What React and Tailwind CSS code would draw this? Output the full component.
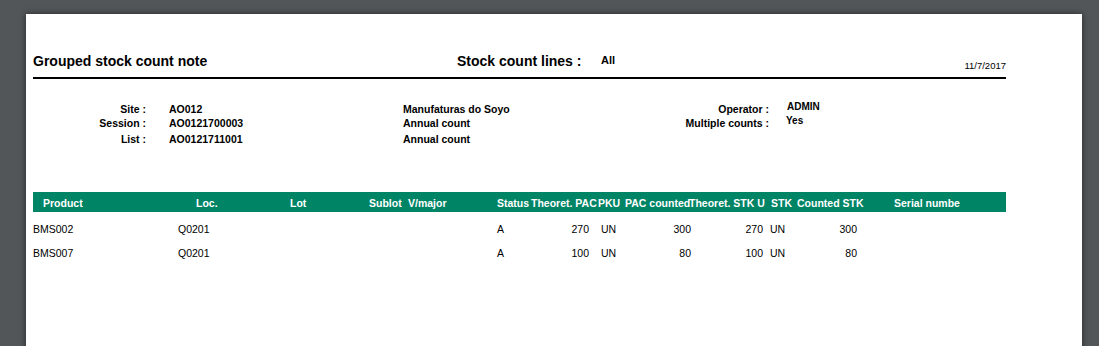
const HEAD = [
  { label: "Product", w: "w-[153px]" },
  { label: "Loc.", w: "w-[94px]" },
  { label: "Lot", w: "w-[79px]" },
  { label: "Sublot", w: "w-[39px]" },
  { label: "V/major", w: "w-[89px]" },
  { label: "Status", w: "w-[34px]" },
  { label: "Theoret. PAC", w: "w-[67px]" },
  { label: "PKU", w: "w-[27px]" },
  { label: "PAC counted", w: "w-[64px]" },
  { label: "Theoret. STK U", w: "w-[82px]" },
  { label: "STK", w: "w-[26px]" },
  { label: "Counted STK", w: "w-[97px]" },
  { label: "Serial numbe", w: "flex-1" },
];

const LINES = [
  { product: "BMS002", loc: "Q0201", status: "A", theo: 270, pku: "UN", counted: 300, theoStk: 270, stk: "UN", countedStk: 300 },
  { product: "BMS007", loc: "Q0201", status: "A", theo: 100, pku: "UN", counted: 80, theoStk: 100, stk: "UN", countedStk: 80 },
];

const INFO = [
  { label: "Site :", value: "AO012", desc: "Manufaturas do Soyo", h: "h-[14px]" },
  { label: "Session :", value: "AO0121700003", desc: "Annual count", h: "h-[16px]" },
  { label: "List :", value: "AO0121711001", desc: "Annual count", h: "h-[14px]" },
];

export default function App() {
  return (
    <div className="h-[346px] overflow-hidden bg-[#525659] pt-[14px] font-['Liberation_Sans',Arial,sans-serif] text-black">
      <div className="ml-[26px] w-[1056px] h-[340px] bg-white shadow-[0_0_6px_rgba(0,0,0,0.55)] px-[7px] pt-[39px]">
        <div className="w-[973px]">

          {/* title row */}
          <div className="flex items-baseline h-[16px] leading-[16px]">
            <span className="w-[424px] text-[14px] font-bold">Grouped stock count note</span>
            <span className="w-[144px] text-[14px] font-bold">Stock count lines :</span>
            <span className="relative -top-[2px] text-[11px] font-bold">All</span>
            <span className="ml-auto relative top-[3px] text-[9.5px]">11/7/2017</span>
          </div>
          <div className="mt-[8px] h-[2px] bg-black" />

          {/* info block */}
          <div className="mt-[23px] flex text-[10.5px] font-bold leading-[14px]">
            <div className="w-[370px]">
              {INFO.map((r) => (
                <div key={r.label} className={`flex ${r.h}`}>
                  <span className="w-[113px] text-right">{r.label}</span>
                  <span className="ml-[23px]">{r.value}</span>
                </div>
              ))}
            </div>
            <div className="w-[240px]">
              {INFO.map((r, i) => (
                <div key={i} className={r.h}>{r.desc}</div>
              ))}
            </div>
            <div>
              <div className="flex h-[13.5px]">
                <span className="w-[126px] text-right">Operator :</span>
                <span className="ml-[18px] relative -top-[2px] text-[10px]">ADMIN</span>
              </div>
              <div className="flex h-[14px]">
                <span className="w-[126px] text-right">Multiple counts :</span>
                <span className="ml-[17px] relative -top-[1.5px] text-[10px]">Yes</span>
              </div>
            </div>
          </div>

          {/* table */}
          <div className="mt-[46px] flex h-[20px] bg-[#008466] pl-[10px] text-[10.5px] font-bold leading-[22px] text-white whitespace-nowrap">
            {HEAD.map((h) => (
              <span key={h.label} className={`${h.w} shrink-0`}>{h.label}</span>
            ))}
          </div>

          <div className="mt-[5px] text-[10.5px] leading-[24px] whitespace-nowrap">
            {LINES.map((l) => (
              <div key={l.product} className="flex">
                <span className="w-[145px]">{l.product}</span>
                <span className="w-[319px]">{l.loc}</span>
                <span className="w-[40px]">{l.status}</span>
                <span className="w-[52px] text-right">{l.theo}</span>
                <span className="w-[50px] pl-[12px]">{l.pku}</span>
                <span className="w-[52px] text-right">{l.counted}</span>
                <span className="w-[72px] text-right">{l.theoStk}</span>
                <span className="w-[40px] pl-[7px]">{l.stk}</span>
                <span className="w-[54px] text-right">{l.countedStk}</span>
              </div>
            ))}
          </div>
        </div>
      </div>
    </div>
  );
}
